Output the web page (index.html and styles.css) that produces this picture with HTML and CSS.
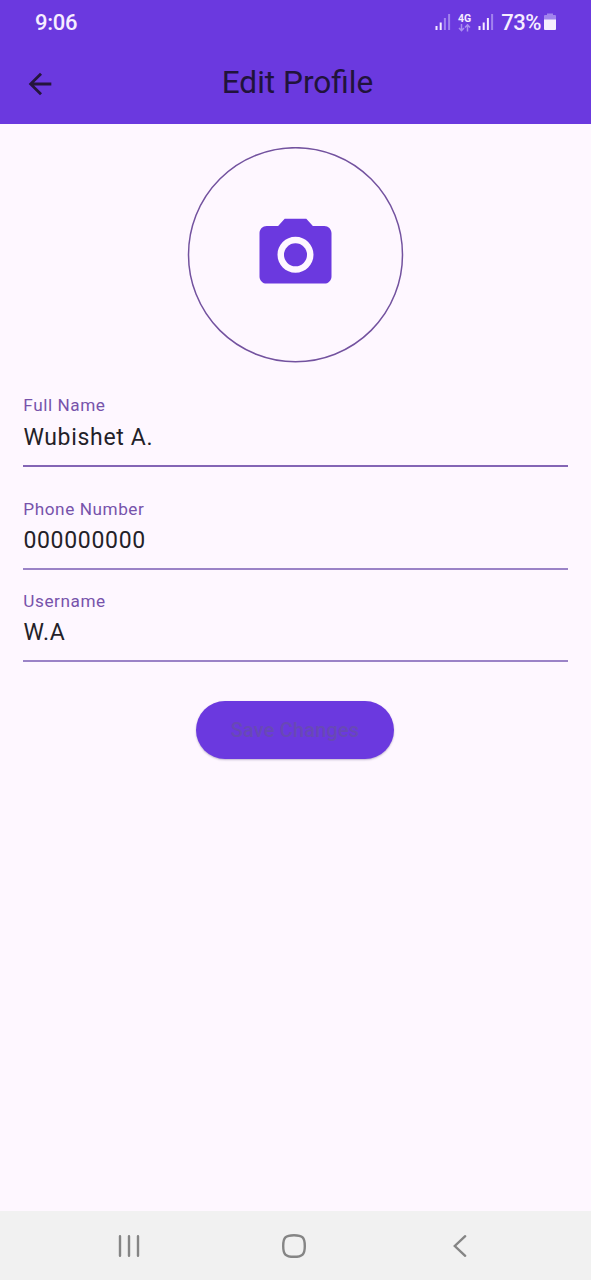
FILE: index.html
```html
<!DOCTYPE html>
<html lang="en">
<head>
<meta charset="utf-8">
<title>Edit Profile</title>
<link rel="stylesheet" href="styles.css">
</head>
<body>
<div class="screen">
  <header class="top">
    <div class="status">
      <span class="time">9:06</span>
      <div class="indicators">
        <svg class="signal" width="16" height="18" viewBox="0 0 16 18"><path class="on" d="M.5 13h2v4h-2zM4.700 9.500h2V17h-2z"/><path class="off" d="M8.900 5h2v12h-2zM13.100 1h2v16h-2z"/></svg>
        <div class="network">
          <span class="network-type">4G</span>
          <svg class="arrows" width="13" height="8" viewBox="0 0 13 8"><path d="M3.500 0v6.500M1 4l2.500 2.700L6 4M9.500 7.500V1M7 3.500L9.500.8 12 3.500"/></svg>
        </div>
        <svg class="signal" width="16" height="18" viewBox="0 0 16 18"><path class="on" d="M.5 13h2v4h-2zM4.700 9.500h2V17h-2zM8.900 5h2v12h-2z"/><path class="off" d="M13.100 1h2v16h-2z"/></svg>
        <span class="percent">73%</span>
        <svg class="battery" width="12" height="18" viewBox="0 0 12 18"><path class="off" d="M3 .5h6V2h2q1 0 1 1v4H0V3q0-1 1-1h2z"/><path class="on" d="M0 6.500h12V16q0 1-1 1H1q-1 0-1-1z"/></svg>
      </div>
    </div>
    <div class="appbar">
      <svg class="back" width="34" height="34" viewBox="0 0 24 24"><path d="M7.825 13L13.425 18.600 12 20 4 12 12 4 13.425 5.400 7.825 11H20V13Z"/></svg>
      <h1 class="title">Edit Profile</h1>
    </div>
  </header>
  <main class="content">
    <svg class="avatar" width="217" height="216" viewBox="0 0 217 216">
      <circle class="ring" cx="108.500" cy="107.700" r="107"/>
      <g transform="translate(65.300 64.600) scale(3.600)"><circle cx="12" cy="12" r="3.200"/><path d="M9 2L7.170 4H4c-1.100 0-2 .9-2 2v12c0 1.100.9 2 2 2h16c1.100 0 2-.9 2-2V6c0-1.100-.9-2-2-2h-3.170L15 2H9zm3 15c-2.760 0-5-2.240-5-5s2.240-5 5-5 5 2.240 5 5-2.240 5-5 5z"/></g>
    </svg>
    <div class="field name"><span class="label">Full Name</span><span class="value">Wubishet A.</span></div>
    <div class="field phone"><span class="label">Phone Number</span><span class="value">000000000</span></div>
    <div class="field user"><span class="label">Username</span><span class="value">W.A</span></div>
    <button class="save">Save Changes</button>
  </main>
  <nav class="navbar">
    <svg width="24" height="24" viewBox="0 0 24 24"><path d="M3 2.200v19.600M12 2.200v19.600M21 2.200v19.600"/></svg>
    <svg width="24" height="24" viewBox="0 0 24 24"><path d="M12 1.200c8.500 0 10.800 2.300 10.800 10.800S20.500 22.800 12 22.800 1.200 20.500 1.200 12 3.500 1.200 12 1.200z"/></svg>
    <svg width="24" height="24" viewBox="0 0 24 24"><path d="M17.200 2.200L6.800 12l10.400 9.800"/></svg>
  </nav>
</div>
</body>
</html>
```
FILE: styles.css
```css
* { box-sizing: border-box; }
body { margin: 0; font-family: Roboto, sans-serif; }
svg { display: block; flex: none; }
.screen {
  width: 591px;
  height: 1280px;
  display: flex;
  flex-direction: column;
  background: #fef7ff;
}
.top { height: 124px; background: #6b39df; }
.status {
  height: 44px;
  padding: 0 35px;
  display: flex;
  align-items: center;
  justify-content: space-between;
  color: #f6edff;
}
.time { font-size: 22px; font-weight: 500; letter-spacing: -0.3px; }
.indicators { display: flex; align-items: center; }
.on { fill: #f6edff; }
.off { fill: #a283ee; }
.network { display: flex; flex-direction: column; align-items: center; margin: 0 7px 0 7px; }
.network-type { font-size: 10.500px; line-height: 11px; font-weight: 700; }
.arrows { fill: none; stroke: #a98df0; stroke-width: 1.500; }
.percent { margin: 0 3px 0 7px; font-size: 22px; font-weight: 500; letter-spacing: -0.500px; }
.appbar {
  height: 80px;
  padding: 0 21px 0 23px;
  display: grid;
  grid-template-columns: 34px 1fr 32px;
  align-items: center;
}
.back { fill: #24153c; }
.title {
  margin: 0 0 3px;
  text-align: center;
  font-size: 31.600px;
  line-height: 40px;
  font-weight: 400;
  color: #21133b;
}
.content {
  flex: 1;
  padding: 23px 23px 0;
  display: flex;
  flex-direction: column;
  align-items: center;
}
.avatar {
  margin-bottom: 32px;
  fill: #6b39df;
}
.ring { fill: none; stroke: #73529f; stroke-width: 1.500; }
.field {
  width: 100%;
  height: 71px;
  display: flex;
  flex-direction: column;
  border-bottom: 2px solid #9b83c7;
}
.name { height: 72px; margin-bottom: 32px; border-color: #8465b5; }
.phone { margin-bottom: 21px; }
.user .label, .phone .label { line-height: 20px; }
.label { padding-left: 0.300px; font-size: 17.200px; line-height: 21px; letter-spacing: 0.560px; color: #7753ab; }
.value { padding-left: 0.400px; margin-top: 6px; font-size: 23px; line-height: 32px; letter-spacing: 0.680px; color: #241f29; }
.save {
  width: 198px;
  height: 58px;
  margin: 39px 1px 0 0;
  padding: 0;
  border: 0;
  border-radius: 29px;
  background: #6b39df;
  color: #6849b5;
  font: 500 20px Roboto, sans-serif;
  letter-spacing: 0.150px;
  box-shadow: 0 1px 2px rgba(50, 30, 90, 0.3);
}
.navbar {
  height: 69px;
  padding: 0 119px 0 117px;
  background: #f1f1f1;
  display: flex;
  align-items: center;
  justify-content: space-between;
  fill: none;
  stroke: #858585;
  stroke-width: 2.400;
  stroke-linecap: round;
}
.navbar svg:nth-child(2) { margin-right: 2px; }
```
